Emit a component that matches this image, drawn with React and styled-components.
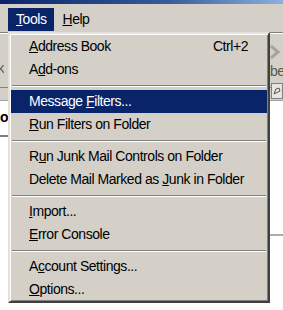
import React from 'react'
import { styled, createGlobalStyle } from 'styled-components'

const GlobalStyle = createGlobalStyle`
  html, body {
    margin: 0;
    padding: 0;
    background: #ffffff;
  }
  body {
    font-family: "Liberation Sans", Arial, sans-serif;
  }
`

const menuItems = [
  { label: 'Address Book', key: 0, shortcut: 'Ctrl+2' },
  { label: 'Add-ons', key: 1 },
  { sep: true },
  { label: 'Message Filters...', key: 8, active: true },
  { label: 'Run Filters on Folder', key: 0 },
  { sep: true },
  { label: 'Run Junk Mail Controls on Folder', key: 1 },
  { label: 'Delete Mail Marked as Junk in Folder', key: 22 },
  { sep: true },
  { label: 'Import...', key: 0 },
  { label: 'Error Console', key: 0 },
  { sep: true },
  { label: 'Account Settings...', key: 1 },
  { label: 'Options...', key: 0 },
]

function Mnemonic({ text, at }) {
  return (
    <>
      {text.slice(0, at)}
      <u>{text[at]}</u>
      {text.slice(at + 1)}
    </>
  )
}

export default function App() {
  return (
    <Screen>
      <GlobalStyle />
      <TitleBar />
      <MenuBar>
        <MenuTitle $open>
          <Mnemonic text="Tools" at={0} />
        </MenuTitle>
        <MenuTitle>
          <Mnemonic text="Help" at={0} />
        </MenuTitle>
      </MenuBar>

      <Toolbar>
        <EdgeSlot>
          <ToolLabel>Junk</ToolLabel>
        </EdgeSlot>
        <RightTools>
          <svg width="11" height="14" viewBox="0 0 11 14">
            <path d="M1 1 L8 7 L1 13" fill="none" stroke="#a7a49c" strokeWidth="3" />
          </svg>
          <ToolLabel>bel</ToolLabel>
        </RightTools>
      </Toolbar>

      <FilterBar>
        <SearchBox>
          <svg width="8" height="8" viewBox="0 0 8 8">
            <path d="M1 7 L3 2 L6 1 L7 4 L3 6 Z" fill="none" stroke="#555" strokeWidth="1" />
          </svg>
        </SearchBox>
      </FilterBar>

      <Content>
        <LeftPane>
          <PaneHeading>or</PaneHeading>
          <PaneRule />
        </LeftPane>
        <RightPane>
          <PaneRule $light />
        </RightPane>
      </Content>

      <BottomGrip>
        <GripBar $shade="#b7b4ac" $w={3} />
        <GripSpace />
        <GripBar $shade="#7a7870" $w={1} />
        <GripBar $shade="#ffffff" $w={1} />
        <GripBar $shade="#404040" $w={1} />
      </BottomGrip>

      <DropMenu>
        {menuItems.map((item, i) =>
          item.sep ? (
            <Separator key={i} />
          ) : (
            <MenuItem key={i} $active={item.active}>
              <span>
                <Mnemonic text={item.label} at={item.key} />
              </span>
              {item.shortcut && <span>{item.shortcut}</span>}
            </MenuItem>
          )
        )}
      </DropMenu>
    </Screen>
  )
}

const Screen = styled.div`
  position: relative;
  width: 283px;
  height: 310px;
  overflow: hidden;
  background: #ffffff;
  font-family: "Liberation Sans", Arial, sans-serif;
  font-size: 14px;
  letter-spacing: -0.45px;
`

const TitleBar = styled.div`
  height: 4px;
  background: linear-gradient(to right, #0a246a, #3a5c9a 60%, #8fb0dc);
`

const MenuBar = styled.div`
  display: flex;
  height: 28px;
  box-sizing: border-box;
  padding: 4px 0 0 8px;
  background: #d4d0c8;
`

const MenuTitle = styled.div`
  height: 23px;
  line-height: 23px;
  padding: 0 8px;
  color: ${(p) => (p.$open ? '#ffffff' : '#000000')};
  background: ${(p) => (p.$open ? '#0a246a' : 'transparent')};
`

const Toolbar = styled.div`
  display: flex;
  justify-content: space-between;
  height: 56px;
  box-sizing: border-box;
  border-top: 1px solid #808080;
  border-bottom: 1px solid #808080;
  box-shadow: inset 0 1px 0 #ffffff;
  background: #d4d0c8;
`

const EdgeSlot = styled.div`
  display: flex;
  justify-content: flex-end;
  width: 4px;
  overflow: hidden;
  padding-top: 27px;
`

const ToolLabel = styled.span`
  font-size: 14px;
  color: #5a5850;
  white-space: nowrap;
`

const RightTools = styled.div`
  display: flex;
  flex-direction: column;
  align-items: flex-start;
  width: 13px;
  gap: 4px;
  padding-top: 12px;
`

const FilterBar = styled.div`
  display: flex;
  justify-content: flex-end;
  height: 12px;
  background: #d4d0c8;
  border-bottom: 1px solid #a0a0a0;
`

const SearchBox = styled.div`
  display: flex;
  align-items: center;
  justify-content: center;
  width: 10px;
  height: 14px;
  margin-top: -5px;
  border: 1px solid #808080;
  background: #e8e6e0;
`

const Content = styled.div`
  display: flex;
  justify-content: space-between;
  height: 220px;
`

const LeftPane = styled.div`
  width: 8px;
  overflow: hidden;
  padding-top: 8px;
`

const PaneHeading = styled.div`
  font-weight: bold;
  font-size: 14px;
  color: #000000;
`

const RightPane = styled.div`
  width: 13px;
  padding-top: 133px;
`

const PaneRule = styled.div`
  height: 2px;
  margin-top: ${(p) => (p.$light ? '0' : '10px')};
  background: ${(p) => (p.$light ? '#b0ada6' : '#808080')};
`

const BottomGrip = styled.div`
  display: flex;
  height: 10px;
  padding-left: 28px;
`

const GripBar = styled.div`
  width: ${(p) => p.$w}px;
  background: ${(p) => p.$shade};
`

const GripSpace = styled.div`
  width: 16px;
`

const DropMenu = styled.div`
  position: absolute;
  left: 8px;
  top: 32px;
  width: 262px;
  box-sizing: border-box;
  background: #d4d0c8;
  border: 2px solid;
  border-color: #e4e1da #404040 #404040 #e4e1da;
  box-shadow: inset 1px 1px 0 #ffffff, inset -1px -1px 0 #808080;
  padding: 1px 1px 0 1px;
`

const MenuItem = styled.div`
  display: flex;
  justify-content: space-between;
  height: 23px;
  line-height: 23px;
  padding: 0 19px 0 18px;
  color: ${(p) => (p.$active ? '#ffffff' : '#000000')};
  background: ${(p) => (p.$active ? '#0a246a' : 'transparent')};
  white-space: nowrap;
`

const Separator = styled.div`
  height: 9px;
  display: flex;
  align-items: center;
  padding: 0 1px;

  &::before {
    content: '';
    flex: 1;
    height: 0;
    border-top: 1px solid #808080;
    border-bottom: 1px solid #ffffff;
  }
`
